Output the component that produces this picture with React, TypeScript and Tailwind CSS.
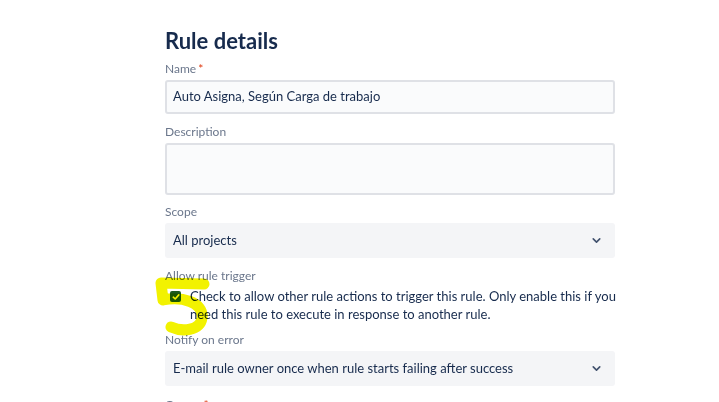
import { ChevronDown } from "lucide-react";

const font = { fontFamily: 'Lato, "Noto Sans", sans-serif' };

function Label({ text, required }: { text: string; required?: boolean }) {
  return (
    <div className="text-[12px] leading-[14px] text-[#6b778c] mb-[4px]">
      {text}
      {required && <span className="text-[#de350b] ml-[2px]">*</span>}
    </div>
  );
}

function Select({ value }: { value: string }) {
  return (
    <div className="h-[35px] rounded-[3px] bg-[#f4f5f7] flex items-center justify-between pl-[8px] pr-[12px] text-[13px] text-[#172b4d]">
      <span>{value}</span>
      <ChevronDown size={13} strokeWidth={3} className="text-[#42526e]" />
    </div>
  );
}

export default function App() {
  return (
    <div className="w-[719px] h-[402px] bg-white overflow-hidden relative" style={font}>
      <div className="w-[450px] ml-[165px] pt-[27px]">
        <h1 className="text-[22px] leading-[28px] font-bold text-[#172b4d] mb-[7px]">Rule details</h1>

        <Label text="Name" required />
        <div className="h-[34px] rounded-[3px] border-2 border-[#dfe1e6] bg-[#fafbfc] flex items-center px-[6px] text-[13px] text-[#172b4d]">
          Auto Asigna, Según Carga de trabajo
        </div>

        <div className="mt-[11px]">
          <Label text="Description" />
          <div className="h-[52px] rounded-[3px] border-2 border-[#dfe1e6] bg-[#fafbfc]" />
        </div>

        <div className="mt-[10px]">
          <Label text="Scope" />
          <Select value="All projects" />
        </div>

        <div className="mt-[11px]">
          <Label text="Allow rule trigger" />
          <div className="flex items-start gap-[9px] pl-[5px]">
            <div className="w-[11px] h-[11px] mt-[4px] shrink-0 rounded-[2px] bg-[#1b5a1f] flex items-center justify-center">
              <svg width="8" height="8" viewBox="0 0 8 8">
                <path d="M1.3 4.2 L3.2 6 L6.8 1.9" fill="none" stroke="white" strokeWidth="1.6" strokeLinecap="round" strokeLinejoin="round" />
              </svg>
            </div>
            <p className="text-[13px] leading-[18px] text-[#172b4d] -mr-[8px]">
              Check to allow other rule actions to trigger this rule. Only enable this if you need this rule to execute in response to another rule.
            </p>
          </div>
        </div>

        <div className="mt-[10px]">
          <Label text="Notify on error" />
          <Select value="E-mail rule owner once when rule starts failing after success" />
        </div>

        <div className="mt-[12px]">
          <Label text="Owner" required />
        </div>
      </div>

      <svg className="absolute left-0 top-0 mix-blend-multiply pointer-events-none" width="719" height="402">
        <path
          d="M204 284 L161 283 L163 300 C 181 296 204 302 202 318 C 200 331 182 332 171 327"
          fill="none"
          stroke="#f2f200"
          strokeWidth="11"
          strokeLinecap="round"
          strokeLinejoin="round"
        />
      </svg>
    </div>
  );
}
